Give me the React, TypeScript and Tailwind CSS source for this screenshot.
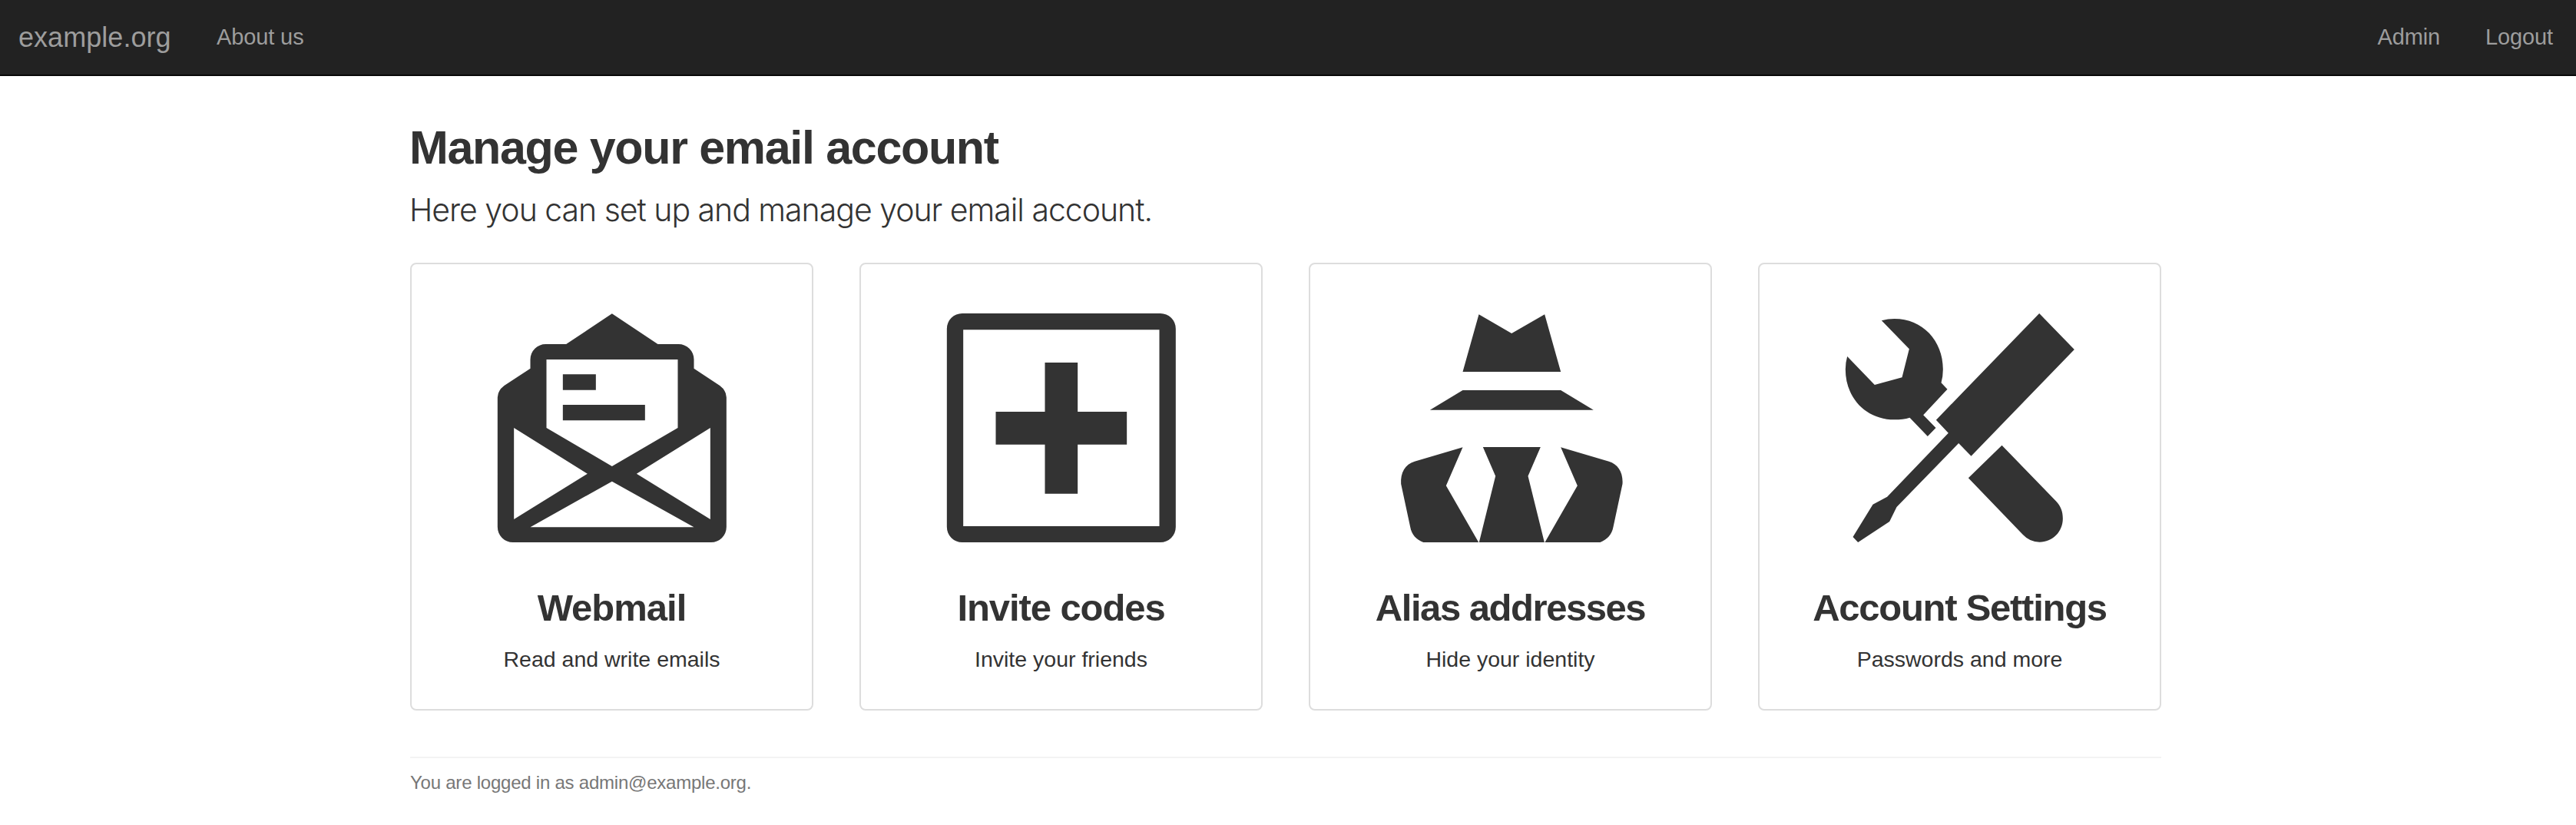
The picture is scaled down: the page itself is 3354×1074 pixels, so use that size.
import React from "react";

function EnvelopeIcon() {
  return (
    <svg className="block h-[310px] w-[300px]" viewBox="51.5 45 900 930" fill="#333333" fillRule="evenodd" aria-hidden="true">
      <path d="M501 55L680 174H760A60 60 0 0 1 821 234V269L922 336Q947 354 948 382V888A60 60 0 0 1 888 948H114A60 60 0 0 1 54 888V382Q55 354 80 336L182 269V234A60 60 0 0 1 243 174H322ZM245 234V501L501 651L758 501V234ZM118 501V858L405 680ZM885 501L597 680L885 858ZM501 710L182 889H821Z" />
      <path d="M309 292H438V353H309ZM309 411H630V472H309Z" />
    </svg>
  );
}

function PlusBoxIcon() {
  return (
    <svg className="block h-[310px] w-[300px]" viewBox="66.5 45 900 930" fill="#333333" fillRule="evenodd" aria-hidden="true">
      <path d="M129 54H903A60 60 0 0 1 963 114V888A60 60 0 0 1 903 948H129A60 60 0 0 1 69 888V114A60 60 0 0 1 129 54ZM133 118V885H899V118Z" />
      <path d="M452 246H580V438H772V566H580V758H452V566H260V438H452Z" />
    </svg>
  );
}

function SpyIcon() {
  return (
    <svg className="block h-[310px] w-[300px]" viewBox="51.5 45 900 930" fill="#333333" aria-hidden="true">
      <path d="M377 58L505 132L634 58L697 282H314Z" />
      <path d="M314 354H697L825 431H186Z" />
      <path d="M393 576H618L569 689L633 948H378L442 689Z" />
      <path d="M314 577L249 727L376 948H160C133 938 114 918 109 888L73 720C70 675 89 643 126 632Z" />
      <path d="M697 577L762 727L635 948H851C877 938 897 918 902 888L938 720C941 675 921 643 885 632Z" />
    </svg>
  );
}

function ToolsIcon() {
  return (
    <svg className="block h-[310px] w-[300px]" viewBox="66.5 45 900 930" fill="#333333" aria-hidden="true">
      <path d="M210 82Q235 75 260 75C370 75 450 160 450 272Q450 300 443 325L467 350L373 451L422 501L390 534L320 461Q295 469 260 469C150 469 69 385 69 272Q69 246 76 222L183 333L290 304L318 193Z" />
      <path d="M826 54L963 195L560 611L511 561L269 810L241 867L118 948L98 927L176 800L232 770L471 521L423 470Z" />
      <path d="M680 569L891 787C910 807 918 828 918 855C918 907 878 947 827 947Q789 947 762 918L549 697Z" />
    </svg>
  );
}

const cards = [
  { title: "Webmail", text: "Read and write emails", Icon: EnvelopeIcon, titleClass: "tracking-[-1px]" },
  { title: "Invite codes", text: "Invite your friends", Icon: PlusBoxIcon, titleClass: "tracking-[-1.08px]" },
  { title: "Alias addresses", text: "Hide your identity", Icon: SpyIcon, titleClass: "tracking-[-1.46px]" },
  { title: "Account Settings", text: "Passwords and more", Icon: ToolsIcon, titleClass: "tracking-[-1.27px]" },
];

export default function App() {
  return (
    <div className="min-h-[1074px] bg-white font-['Liberation_Sans',Arial,sans-serif] text-[#333333]">
      <nav className="flex h-[99px] items-center border-b-2 border-[#080808] bg-[#222222] pr-[30px] pl-6 text-[29px] tracking-[-0.12px] text-[#9d9d9d]">
        <a className="w-[258px] text-[36px] tracking-[0.05px]">example.org</a>
        <a>About us</a>
        <div className="ml-auto flex gap-[59px]">
          <a>Admin</a>
          <a>Logout</a>
        </div>
      </nav>

      <main className="ml-[534px] w-[2280px] pt-[60px]">
        <h1 className="-ml-px text-[61px] leading-[66px] font-bold tracking-[-1.33px]">Manage your email account</h1>
        <p className="mt-[19px] -ml-px font-[Inter,sans-serif] text-[41px] leading-[58px] font-light tracking-[-1.02px]">
          Here you can set up and manage your email account.
        </p>

        <div className="mt-10 grid grid-cols-4 gap-[60px]">
          {cards.map(({ title, text, Icon, titleClass }) => (
            <a key={title} className="flex h-[583px] flex-col items-center rounded-lg border-2 border-[#dddddd] bg-white pt-[61px] text-center">
              <Icon />
              <h3 className={`mt-[50px] text-[49px] leading-[52px] font-bold ${titleClass}`}>{title}</h3>
              <p className="mt-[21px] text-[28.5px] leading-10">{text}</p>
            </a>
          ))}
        </div>

        <footer className="mt-[60px] border-t-2 border-[#f3f3f3] pt-[15px] text-2xl leading-[34px] tracking-[-0.23px] text-[#777777]">
          You are logged in as admin@example.org.
        </footer>
      </main>
    </div>
  );
}
